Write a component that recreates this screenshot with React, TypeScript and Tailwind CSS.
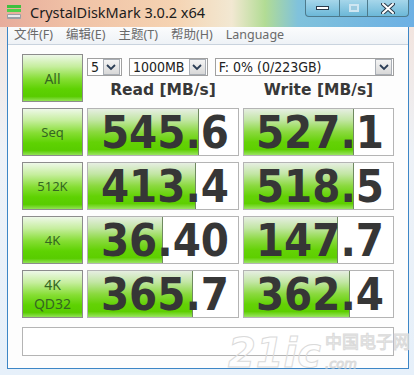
import React from 'react';

type Row = {
  label: string[];
  read: string;
  readPct: number;
  write: string;
  writePct: number;
};

// Benchmark results, bar width in percent of the meter box
const rows: Row[] = [
  { label: ['Seq'], read: '545.6', readPct: 74, write: '527.1', writePct: 73.5 },
  { label: ['512K'], read: '413.4', readPct: 72, write: '518.5', writePct: 73.5 },
  { label: ['4K'], read: '36.40', readPct: 50, write: '147.7', writePct: 63 },
  { label: ['4K', 'QD32'], read: '365.7', readPct: 70, write: '362.4', writePct: 71 },
];

const menu = ['文件(F)', '编辑(E)', '主题(T)', '帮助(H)', 'Language'];

const greenBtn =
  'bg-[linear-gradient(to_bottom,#eef8e8_0%,#c6ee9e_25%,#86de34_52%,#5ed202_74%,#58cc00_90%,#92e256_100%)]';

const meterFill =
  'bg-[linear-gradient(to_bottom,#e6eee2_0%,#c2e6a4_24%,#8ad93e_50%,#64d206_72%,#5ecf00_88%,#9ae462_100%)]';

const Chevron: React.FC = () => (
  <span className="flex h-[16px] w-[17px] items-center justify-center border border-[#a9aeb5] bg-[linear-gradient(to_bottom,#f4f4f4,#d8d8d8)]">
    <svg width="10" height="7" viewBox="0 0 10 7">
      <polyline points="1,1 5,5 9,1" fill="none" stroke="#2b3d55" strokeWidth="1.8" />
    </svg>
  </span>
);

const Select: React.FC<{ value: string; className: string }> = ({ value, className }) => (
  <div className={`flex h-[18px] items-center justify-between border border-[#a0a0a0] bg-white pl-[3px] pr-[1px] ${className}`}>
    <span className="text-[14px] leading-none text-[#222] [font-family:'DejaVu_Sans_Condensed','DejaVu_Sans',sans-serif]">{value}</span>
    <Chevron />
  </div>
);

const Meter: React.FC<{ value: string; pct: number }> = ({ value, pct }) => (
  <div className="relative h-[48px] border border-[#b4b4b4] bg-white">
    <div
      className={`absolute left-0 top-0 h-full border-r border-[#6f8a60] ${meterFill}`}
      style={{ width: `${pct}%` }}
    />
    <div className="relative flex h-full items-center justify-end pr-[9px] pt-[1px] text-[45px] font-bold leading-none text-[#363636] [font-family:'DejaVu_Sans_Condensed','DejaVu_Sans',sans-serif] [font-stretch:condensed]">
      {value}
    </div>
  </div>
);

const LabelButton: React.FC<{ lines: string[]; big?: boolean }> = ({ lines, big }) => (
  <div
    className={`flex h-[48px] flex-col items-center justify-center border border-[#8c8c8c] ${greenBtn} leading-[19px] text-[#356622] [font-family:'Noto_Sans',sans-serif] ${big ? 'text-[14px]' : 'text-[13px]'}`}
  >
    {lines.map((l) => (
      <span key={l}>{l}</span>
    ))}
  </div>
);

export default function App() {
  return (
    <div className="relative h-[375px] w-[414px] overflow-hidden bg-[linear-gradient(to_bottom,#f3e2da_0%,#eef2f7_40%,#e6f0fa_100%)]">
      {/* Title bar */}
      <div className="flex h-[27px] items-start bg-[linear-gradient(90deg,#e7ac9c_0%,#f0c2a6_18%,#f5d3b2_42%,#f2e8d2_56%,#b2dc94_64%,#80c2dc_72%,#6cb0e4_100%)]">
        <div className="flex items-center gap-[8px] pl-[6px] pt-[4px]">
          <svg width="16" height="16" viewBox="0 0 16 16">
            <rect x="1" y="1" width="14" height="3" fill="#3fbf3f" />
            <rect x="1" y="5" width="14" height="3" fill="#4fd04a" />
            <rect x="1" y="10" width="14" height="5" rx="1" fill="#9aa0a6" />
            <rect x="2" y="11" width="12" height="2" fill="#e8eaec" />
          </svg>
          <span className="text-[14.5px] leading-none text-[#1c1c1c] [font-family:'Noto_Sans',sans-serif]">
            CrystalDiskMark 3.0.2 x64
          </span>
        </div>
        <div className="ml-auto mr-[5px] flex h-[17px] overflow-hidden rounded-b-[4px] border border-t-0 border-[#4d7a8c] bg-[linear-gradient(to_bottom,#a6d6ea,#6cb8d8)]">
          <div className="flex w-[34px] items-center justify-center border-r border-[#4d7a8c]">
            <span className="h-[4px] w-[13px] border border-[#2a3a4a] bg-white" />
          </div>
          <div className="flex w-[28px] items-center justify-center border-r border-[#4d7a8c]">
            <span className="h-[8px] w-[10px] border-2 border-[#cfe6f2] bg-[#9ccbe0]" />
          </div>
          <div className="flex w-[40px] items-center justify-center">
            <svg width="14" height="11" viewBox="0 0 14 11">
              <path d="M2 1 L12 10 M12 1 L2 10" stroke="#2a3a4a" strokeWidth="4" strokeLinecap="round" />
              <path d="M2 1 L12 10 M12 1 L2 10" stroke="#ffffff" strokeWidth="2" strokeLinecap="round" />
            </svg>
          </div>
        </div>
      </div>

      {/* Window body */}
      <div className="ml-[7px] h-[342px] w-[402px] border border-t-0 border-[#3d86c6] bg-[#fdfdfd]">
        {/* Menu bar */}
        <div className="flex h-[18px] items-center gap-[13px] border-b border-[#c9d3de] bg-[linear-gradient(to_bottom,#fbfcfd,#eef2f6)] pl-[6px] text-[12.5px] leading-none text-[#6a6a6a] [font-family:'Noto_Sans','Noto_Sans_CJK_SC',sans-serif]">
          {menu.map((m) => (
            <span key={m}>{m}</span>
          ))}
        </div>

        {/* Client area */}
        <div className="flex flex-col px-[14px] pt-[9px]">
          <div className="grid grid-cols-[61px_152px_151px] gap-x-[4px] gap-y-[6px]">
            <LabelButton lines={['All']} big />
            <div className="col-span-2 flex flex-col">
              <div className="mt-[4px] flex gap-[7px]">
                <Select value="5" className="w-[35px]" />
                <Select value="1000MB" className="w-[79px]" />
                <Select value="F: 0% (0/223GB)" className="w-[180px]" />
              </div>
              <div className="mt-[7px] grid grid-cols-[152px_151px] gap-x-[4px] text-center text-[15.5px] font-bold leading-none text-[#383838] [font-family:'DejaVu_Sans',sans-serif]">
                <span>Read [MB/s]</span>
                <span>Write [MB/s]</span>
              </div>
            </div>
            {rows.map((r) => (
              <React.Fragment key={r.read}>
                <LabelButton lines={r.label} big={r.label.length > 1} />
                <Meter value={r.read} pct={r.readPct} />
                <Meter value={r.write} pct={r.writePct} />
              </React.Fragment>
            ))}
          </div>
          <div className="mt-[9px] h-[29px] border border-[#b4b4b4] bg-white" />
        </div>
      </div>

      {/* Watermark */}
      <div className="pointer-events-none absolute bottom-[2px] right-[4px] flex items-end gap-[4px] text-transparent [-webkit-text-stroke:1px_#dadada]">
        <span className="text-[40px] font-bold italic leading-none [font-family:'DejaVu_Sans',sans-serif]">21ic</span>
        <div className="flex flex-col">
          <span className="text-[17px] [font-family:'Noto_Sans_CJK_SC',sans-serif]">中国电子网</span>
          <span className="text-[13px] italic [font-family:'DejaVu_Sans',sans-serif]">.com</span>
        </div>
      </div>
    </div>
  );
}
